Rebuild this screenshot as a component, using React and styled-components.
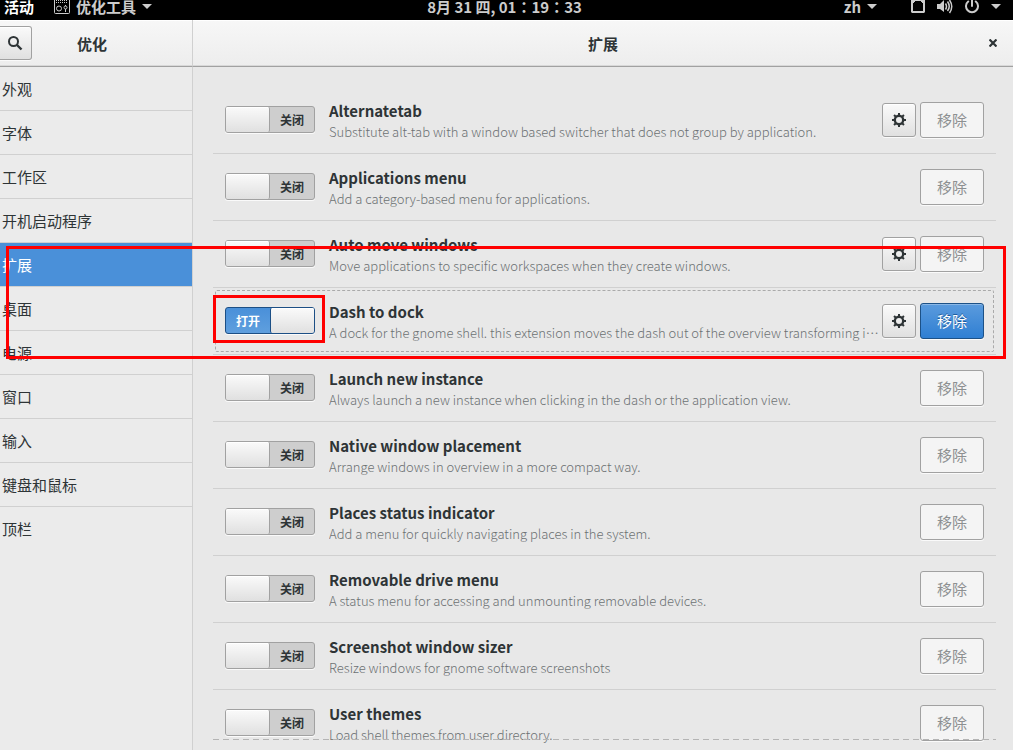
import React, { useState } from "react";
import styled, { createGlobalStyle, css } from "styled-components";

const Global = createGlobalStyle`
  *, *::before, *::after { box-sizing: border-box; }
  html, body, #root { height: 100%; }
  body {
    margin: 0;
    overflow: hidden;
    background: #e8e8e8;
    color: #2e3436;
    font-family: "Noto Sans CJK SC", sans-serif;
    font-size: 15px;
    line-height: 20px;
  }
  button { font: inherit; padding: 0; cursor: pointer; }
`;

const Desktop = styled.div`
  position: relative;
  display: flex;
  flex-direction: column;
  height: 100%;
  overflow: hidden;
`;

const TopBar = styled.header`
  display: grid;
  grid-template-columns: 1fr auto 1fr;
  align-items: start;
  flex: none;
  height: 20px;
  padding: 0 8px 0 4px;
  overflow: hidden;
  background: #000;
  color: #ccc;
  font-weight: bold;
  line-height: 14px;
`;

const BarGroup = styled.div`
  display: flex;
  justify-content: ${(p) => (p.$end ? "flex-end" : "flex-start")};
  gap: ${(p) => (p.$end ? 34 : 20)}px;
  padding-right: ${(p) => (p.$end ? 4 : 0)}px;
`;

const BarButton = styled.button`
  display: flex;
  align-items: flex-start;
  gap: ${(p) => p.$gap || 6}px;
  border: 0;
  background: none;
  color: ${(p) => (p.$bright ? "#fff" : "#ccc")};
  font-weight: bold;
  line-height: 14px;
  white-space: pre;
`;

const Clock = styled(BarButton)`
  font-family: "Noto Sans CJK TC", sans-serif;
`;

const Caret = styled.span`
  width: 0;
  margin-top: 4px;
  border: 5px solid transparent;
  border-top-color: #ccc;
  border-bottom: 0;
`;

const Window = styled.main`
  display: grid;
  grid-template-columns: 193px 1fr;
  grid-template-rows: 47px 1fr;
  flex: 1;
  min-height: 0;
`;

const HeaderBar = styled.div`
  position: relative;
  display: flex;
  align-items: center;
  justify-content: center;
  border-bottom: 1px solid #a1a1a1;
  box-shadow: inset 0 -1px #d8d8d8, inset 0 1px #fff;
  background: linear-gradient(#f7f7f7, #ededed);
  ${(p) => p.$side && css`border-right: 1px solid #d0d0d0;`}
`;

const HeaderTitle = styled.h1`
  margin: 0;
  font-size: 15px;
  line-height: 20px;
  padding-top: 1px;
`;

const SideHeader = styled.div`
  display: grid;
  grid-template-columns: 32px 1fr 40px;
  align-items: center;
  flex: 1;
  text-align: center;
`;

const raised = css`
  border: 1px solid #a1a1a1;
  border-radius: 3px;
  box-shadow: inset 0 1px #fff, 0 1px #fafafa;
  background: linear-gradient(#fafafa, #e0e0e0);
  color: #2e3436;
`;

const SearchButton = styled.button`
  ${raised}
  display: flex;
  align-items: center;
  justify-content: center;
  height: 34px;
  padding-right: 1px;
  border-left: 0;
  border-radius: 0 3px 3px 0;
`;

const CloseButton = styled.button`
  position: absolute;
  right: 12px;
  display: flex;
  padding: 4px;
  border: 0;
  background: none;
  color: #2e3436;
`;

const Sidebar = styled.nav`
  border-right: 1px solid #d0d0d0;
  background: #ebebeb;
`;

const NavLink = styled.a`
  display: flex;
  align-items: center;
  height: 44px;
  padding-left: 2px;
  border-bottom: 1px solid ${(p) => (p.$last ? "transparent" : "#d0d0d0")};
  background: ${(p) => (p.$active ? "#4a90d9" : "transparent")};
  color: ${(p) => (p.$active ? "#fff" : "#2e3436")};
  text-decoration: none;
`;

const Content = styled.section`
  position: relative;
  min-width: 0;
  padding: 20px 17px 0 20px;
  overflow: hidden;
`;

const List = styled.ul`
  margin: 0;
  padding: 0;
  list-style: none;
`;

const Row = styled.li`
  position: relative;
  display: flex;
  align-items: center;
  height: 67px;
  padding: 0 12px;
  border-bottom: 1px solid #d0d0d0;
`;

const FocusRing = styled.span`
  position: absolute;
  inset: 2px;
  border: 1px dashed #aaa;
  border-radius: 2px;
  pointer-events: none;
`;

const SwitchLabel = styled.label`
  position: relative;
  flex: none;
  display: grid;
  grid-template-columns: 1fr 1fr;
  grid-template-rows: 25px;
  width: 90px;
  height: 27px;
  margin-bottom: 1px;
  border: 1px solid ${(p) => (p.$on ? "#1c4f85" : "#a1a1a1")};
  border-radius: 3px;
  box-shadow: 0 1px #fafafa;
  background: ${(p) => (p.$on ? "linear-gradient(#4a90d9, #5f9fde)" : "#cecece")};
  color: ${(p) => (p.$on ? "#fff" : "#2e3436")};
  font-size: 12px;
  font-weight: bold;
  line-height: 26px;
  text-align: center;
  cursor: pointer;
`;

const SwitchInput = styled.input`
  position: absolute;
  inset: 0;
  width: 100%;
  height: 100%;
  margin: 0;
  opacity: 0;
`;

const Knob = styled.span`
  order: ${(p) => (p.$on ? 2 : 0)};
  height: 25px;
  border-${(p) => (p.$on ? "left" : "right")}: 1px solid ${(p) => (p.$on ? "#1c4f85" : "#a1a1a1")};
  border-radius: 2px;
  box-shadow: inset 0 1px #fff;
  background: linear-gradient(#fafafa, #e0e0e0);
`;

const Info = styled.div`
  flex: 1;
  min-width: 0;
  margin: 0 2px 0 14px;
`;

const Name = styled.h2`
  margin: 0;
  font-size: 15px;
  line-height: 24px;
`;

const Description = styled.p`
  margin: 0;
  overflow: hidden;
  color: #6c7173;
  font-size: 13px;
  font-weight: 300;
  line-height: 18px;
  text-overflow: ellipsis;
  white-space: nowrap;
`;

const SettingsButton = styled.button`
  ${raised}
  display: flex;
  align-items: center;
  justify-content: center;
  width: 34px;
  height: 34px;
  margin-right: 4px;
`;

const RemoveButton = styled.button`
  width: 64px;
  height: 36px;
  border: 1px solid #a1a1a1;
  border-radius: 3px;
  box-shadow: 0 1px #fafafa;
  background: #f4f4f4;
  color: #8d9091;
  ${(p) => p.$primary && css`
    border-color: #1c5187;
    box-shadow: inset 0 1px #8ab7e6, 0 1px #fafafa;
    background: linear-gradient(#5b9bdd, #2f7fd3);
    color: #fff;
    text-shadow: 0 -1px #1f5c9c;
  `}
`;

const Undershoot = styled.div`
  position: absolute;
  left: 20px;
  right: 17px;
  bottom: 10px;
  height: 1px;
  background: repeating-linear-gradient(90deg, #b4b4b4 0 6px, transparent 6px 10px);
`;

const Mark = styled.div`
  position: absolute;
  z-index: 2;
  border: 3px solid #f00;
  pointer-events: none;
`;

const BandMark = styled(Mark)`
  top: 246px;
  left: 6px;
  right: 7px;
  height: 113px;
`;

const SwitchMark = styled(Mark)`
  inset: -13px -11px -10px -13px;
`;

const AppIcon = () => (
  <svg width="16" height="14" viewBox="0 0 16 14" fill="none" stroke="#ccc" aria-hidden="true">
    <path d="M.5 0v12.500q0 1 1 1h13q1 0 1-1V0" />
    <path d="M2 .5h12M2 2.500h12" strokeDasharray="1 1" />
    <circle cx="5" cy="8.500" r="2.500" />
    <path d="M11.500 5v7" />
    <circle cx="11.500" cy="7.500" r="1.500" fill="#000" />
  </svg>
);

const ScreenIcon = () => (
  <svg width="14" height="13" viewBox="0 0 14 13" fill="#ccc" aria-hidden="true">
    <path fillRule="evenodd" d="M0 0h14v12l-1 1H1l-1-1zM4 1v1H3v1H2v8h10V3h-1V2h-1V1z" />
  </svg>
);

const VolumeIcon = () => (
  <svg width="16" height="14" viewBox="0 0 16 14" fill="none" stroke="#ccc" strokeWidth="1.500" aria-hidden="true">
    <path d="M0 4h3l4-4v12L3 9H0z" fill="#ccc" stroke="none" />
    <path d="M8.500 3.500q2 3 0 6M10.500 1.500q3.500 5 0 9.500M12.500 0q4.500 6.500 0 13" />
  </svg>
);

const PowerIcon = () => (
  <svg width="14" height="14" viewBox="0 0 14 14" fill="none" stroke="#ccc" strokeWidth="2" strokeLinecap="round" aria-hidden="true">
    <path d="M3.200 1.500a6 6 0 1 0 7.600 0M7 0v6" />
  </svg>
);

const SearchIcon = () => (
  <svg width="16" height="16" viewBox="0 0 16 16" fill="none" stroke="currentColor" strokeWidth="2" aria-hidden="true">
    <circle cx="6.500" cy="6.500" r="4.500" />
    <path d="M10 10l4.500 4.500" strokeWidth="2.400" />
  </svg>
);

const CloseIcon = () => (
  <svg width="8" height="8" viewBox="0 0 8 8" stroke="currentColor" strokeWidth="2.200" aria-hidden="true">
    <path d="M.5.5l7 7M7.500.5l-7 7" />
  </svg>
);

const GearIcon = () => (
  <svg width="14" height="14" viewBox="-7 -7 14 14" fill="none" stroke="currentColor" aria-hidden="true">
    <circle r="4.200" strokeWidth="2.400" />
    {[0, 45, 90, 135, 180, 225, 270, 315].map((a) => (
      <path key={a} d="M0-7v2.500" strokeWidth="2" transform={`rotate(${a})`} />
    ))}
  </svg>
);

const sections = ["外观", "字体", "工作区", "开机启动程序", "扩展", "桌面", "电源", "窗口", "输入", "键盘和鼠标", "顶栏"];

const extensions = [
  { name: "Alternatetab", text: "Substitute alt-tab with a window based switcher that does not group by application.", settings: true },
  { name: "Applications menu", text: "Add a category-based menu for applications." },
  { name: "Auto move windows", text: "Move applications to specific workspaces when they create windows.", settings: true },
  {
    name: "Dash to dock",
    text: "A dock for the gnome shell. this extension moves the dash out of the overview transforming it in",
    settings: true,
    enabled: true,
    focused: true,
  },
  { name: "Launch new instance", text: "Always launch a new instance when clicking in the dash or the application view." },
  { name: "Native window placement", text: "Arrange windows in overview in a more compact way." },
  { name: "Places status indicator", text: "Add a menu for quickly navigating places in the system." },
  { name: "Removable drive menu", text: "A status menu for accessing and unmounting removable devices." },
  { name: "Screenshot window sizer", text: "Resize windows for gnome software screenshots" },
  { name: "User themes", text: "Load shell themes from user directory." },
];

function Extension({ name, text, settings, enabled, focused }) {
  const [on, setOn] = useState(Boolean(enabled));
  return (
    <Row>
      {focused && <FocusRing />}
      <SwitchLabel $on={on}>
        <SwitchInput type="checkbox" role="switch" aria-label={name} checked={on} onChange={() => setOn(!on)} />
        <Knob $on={on} />
        <span>{on ? "打开" : "关闭"}</span>
        {focused && <SwitchMark />}
      </SwitchLabel>
      <Info>
        <Name>{name}</Name>
        <Description>{text}</Description>
      </Info>
      {settings && (
        <SettingsButton aria-label={`${name} settings`}>
          <GearIcon />
        </SettingsButton>
      )}
      <RemoveButton $primary={focused}>移除</RemoveButton>
    </Row>
  );
}

export default function App() {
  return (
    <Desktop>
      <Global />
      <TopBar>
        <BarGroup>
          <BarButton $bright>活动</BarButton>
          <BarButton>
            <AppIcon />
            优化工具
            <Caret />
          </BarButton>
        </BarGroup>
        <Clock>8月 31 四, 01：19：33</Clock>
        <BarGroup $end>
          <BarButton>
            zh
            <Caret />
          </BarButton>
          <BarButton $gap={12} aria-label="System menu">
            <ScreenIcon />
            <VolumeIcon />
            <PowerIcon />
            <Caret />
          </BarButton>
        </BarGroup>
      </TopBar>
      <Window>
        <HeaderBar $side>
          <SideHeader>
            <SearchButton aria-label="Search">
              <SearchIcon />
            </SearchButton>
            <HeaderTitle as="h2">优化</HeaderTitle>
          </SideHeader>
        </HeaderBar>
        <HeaderBar>
          <HeaderTitle>扩展</HeaderTitle>
          <CloseButton aria-label="Close">
            <CloseIcon />
          </CloseButton>
        </HeaderBar>
        <Sidebar>
          {sections.map((s, i) => (
            <NavLink key={s} href="#" $active={s === "扩展"} $last={i === sections.length - 1}>
              {s}
            </NavLink>
          ))}
        </Sidebar>
        <Content>
          <List>
            {extensions.map((e) => (
              <Extension key={e.name} {...e} />
            ))}
          </List>
          <Undershoot />
        </Content>
      </Window>
      <BandMark />
    </Desktop>
  );
}
